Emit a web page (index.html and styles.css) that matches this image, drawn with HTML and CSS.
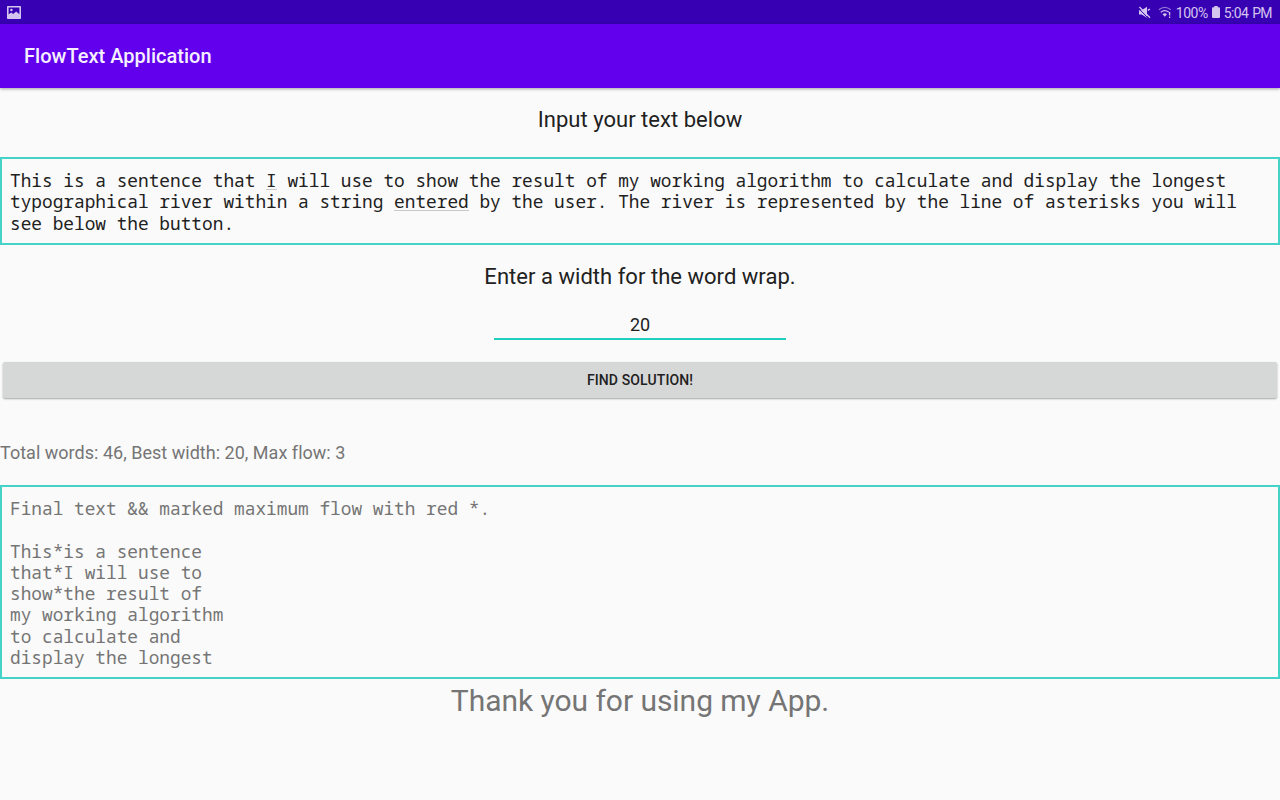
FILE: index.html
```html
<!DOCTYPE html>
<html lang="en">
<head>
<meta charset="utf-8">
<title>FlowText Application</title>
<link rel="stylesheet" href="styles.css">
</head>
<body>
<div class="status">
  <svg class="pic" width="14" height="13" viewBox="0 0 14 13"><path d="M.8 0h12.4q.8 0 .8.8v11.4q0 .8-.8.8H.8Q0 13 0 12.2V.8Q0 0 .8 0zM1.6 1.6v7L4.2 6.4l1.9 1.7 3.1-2.7 3.2 2.9V1.6z" fill="currentColor" fill-rule="evenodd"/><circle cx="4.4" cy="4" r="1.2" fill="currentColor"/></svg>
  <div class="tray">
    <svg class="mute" width="13" height="13" viewBox="0 0 13 13"><path d="M1 4.2h2.6L9 .8v11L3.6 8.6H1z" fill="currentColor"/><path d="M.4 2.2L10.6 12.6" stroke="#3700b3" stroke-width="1"/><path d="M1.4 1L12 11.8M9.8 4.4l2.2-1.4" stroke="currentColor" stroke-width="1.3"/></svg>
    <svg class="wifi" width="14" height="13" viewBox="0 0 14 13"><g fill="none" stroke="currentColor" stroke-width="1.1"><path d="M.8 3.8q6-4.8 12 0" opacity=".6"/><path d="M2.8 6.2q4-3.2 8 0"/></g><path d="M4.6 8.2q2.2-1.7 4.4 0L6.8 10.8z" fill="currentColor"/><path d="M11.6 6v3.6M11.6 10.6V12" stroke="currentColor" stroke-width="1.3"/></svg>
    <span class="pct">100%</span>
    <svg class="batt" width="8" height="12" viewBox="0 0 8 12"><path d="M2.3 0h3.4v1.3H7q1 0 1 1V11q0 1-1 1H1q-1 0-1-1V2.3q0-1 1-1h1.3z" fill="currentColor"/></svg>
    <span class="time">5:04 PM</span>
  </div>
</div>
<header class="bar">FlowText Application</header>
<main>
  <div class="prompt p1">Input your text below</div>
  <div class="box input">
    <div class="line"><span>This is a sentence that </span><span class="mark">I</span><span> will use to show the result of my working algorithm to calculate and display the longest</span></div>
    <div class="line"><span>typographical river within a string </span><span class="mark">entered</span><span> by the user. The river is represented by the line of asterisks you will</span></div>
    <div class="line"><span>see below the button.</span></div>
  </div>
  <div class="prompt p2">Enter a width for the word wrap.</div>
  <div class="width">20</div>
  <div class="button">FIND SOLUTION!</div>
  <div class="stats">Total words: 46, Best width: 20, Max flow: 3</div>
  <div class="box output"><pre>Final text &amp;&amp; marked maximum flow with red *.

This*is a sentence
that*I will use to
show*the result of
my working algorithm
to calculate and
display the longest</pre></div>
  <div class="thanks">Thank you for using my App.</div>
</main>
</body>
</html>
```
FILE: styles.css
```css
* { box-sizing: border-box; }
body { margin: 0; width: 1280px; height: 800px; overflow: hidden; background: #fafafa; color: #212121; font-family: Roboto, sans-serif; }
.status { height: 24px; background: #3700b3; color: #d3c5ee; display: flex; align-items: center; justify-content: space-between; padding: 0 8px 0 7px; font-size: 14px; }
.status svg { display: block; }
.tray { display: flex; align-items: center; padding-top: 1px; }
.wifi { margin: 0 4px 0 7px; }
.batt { margin: 0 4px 2px 4px; }
.pct { letter-spacing: -.5px; }
.time { letter-spacing: -.6px; word-spacing: 1px; }
.bar { height: 64px; background: #6200ee; color: #f6efff; padding-left: 24px; font-size: 20px; font-weight: 500; line-height: 65px; letter-spacing: .02px; box-shadow: 0 1px 3px rgba(0,0,0,.35); }
.prompt { text-align: center; font-size: 22px; line-height: 26px; letter-spacing: .03px; }
.p1 { margin-top: 19px; }
.p2 { margin-top: 19px; }
.box { border: 2px solid #45d2c8; border-top-width: 2px; font-family: "Noto Sans Mono", "DejaVu Sans Mono", monospace; font-size: 17.79px; line-height: 21.3px; padding: 11px 8px; }
.input { height: 88px; margin-top: 24px; }
.line { display: flex; height: 21.3px; white-space: pre; }
.mark { height: 20px; border-bottom: 1px solid #c8c8c8; }
.width { width: 292px; height: 31px; margin: 19px auto 0; border-bottom: 2px solid #1fcfc0; text-align: center; font-size: 18px; line-height: 31px; }
.button { height: 36px; margin: 22px 3px 0; background: #d6d7d7; border-radius: 2px; text-align: center; font-size: 14px; font-weight: 500; line-height: 36px; letter-spacing: .12px; box-shadow: 0 1px 2px rgba(0,0,0,.35); }
.stats { margin-top: 44px; color: #757575; font-size: 18px; line-height: 21px; letter-spacing: .02px; }
.output { height: 194px; margin-top: 22px; color: #757575; }
.output pre { margin: 0; font: inherit; }
.thanks { margin-top: 4px; text-align: center; color: #757575; font-size: 30px; line-height: 36px; letter-spacing: -.04px; }
```
